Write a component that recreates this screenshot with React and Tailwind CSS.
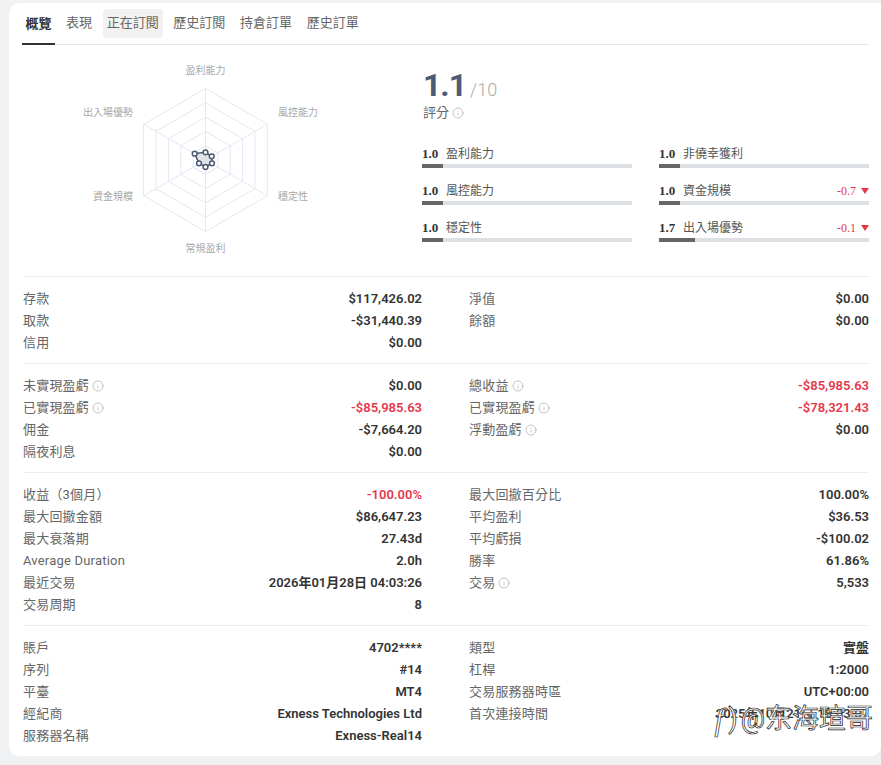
import React from "react";
import { Info } from "lucide-react";

const cjk = "font-['Roboto','Noto_Sans_CJK_TC',sans-serif]";

const tabs = ["表現", "正在訂閱", "歷史訂閱", "持倉訂單", "歷史訂單"];

const scoresLeft = [
  { score: "1.0", label: "盈利能力", pct: "w-[10%]" },
  { score: "1.0", label: "風控能力", pct: "w-[10%]" },
  { score: "1.0", label: "穩定性", pct: "w-[10%]" },
];

const scoresRight = [
  { score: "1.0", label: "非僥幸獲利", pct: "w-[10%]" },
  { score: "1.0", label: "資金規模", pct: "w-[10%]", delta: "-0.7" },
  { score: "1.7", label: "出入場優勢", pct: "w-[17%]", delta: "-0.1" },
];

const sections = [
  {
    left: [
      { label: "存款", value: "$117,426.02" },
      { label: "取款", value: "-$31,440.39" },
      { label: "信用", value: "$0.00" },
    ],
    right: [
      { label: "淨值", value: "$0.00" },
      { label: "餘額", value: "$0.00" },
    ],
  },
  {
    left: [
      { label: "未實現盈虧", value: "$0.00", info: true },
      { label: "已實現盈虧", value: "-$85,985.63", info: true, red: true },
      { label: "佣金", value: "-$7,664.20" },
      { label: "隔夜利息", value: "$0.00" },
    ],
    right: [
      { label: "總收益", value: "-$85,985.63", info: true, red: true },
      { label: "已實現盈虧", value: "-$78,321.43", info: true, red: true },
      { label: "浮動盈虧", value: "$0.00", info: true },
    ],
  },
  {
    left: [
      { label: "收益（3個月）", value: "-100.00%", red: true },
      { label: "最大回撤金額", value: "$86,647.23" },
      { label: "最大衰落期", value: "27.43d" },
      { label: "Average Duration", value: "2.0h" },
      { label: "最近交易", value: "2026年01月28日 04:03:26" },
      { label: "交易周期", value: "8" },
    ],
    right: [
      { label: "最大回撤百分比", value: "100.00%" },
      { label: "平均盈利", value: "$36.53" },
      { label: "平均虧損", value: "-$100.02" },
      { label: "勝率", value: "61.86%" },
      { label: "交易", value: "5,533", info: true },
    ],
  },
  {
    left: [
      { label: "賬戶", value: "4702****" },
      { label: "序列", value: "#14" },
      { label: "平臺", value: "MT4" },
      { label: "經紀商", value: "Exness Technologies Ltd" },
      { label: "服務器名稱", value: "Exness-Real14" },
    ],
    right: [
      { label: "類型", value: "實盤" },
      { label: "杠桿", value: "1:2000" },
      { label: "交易服務器時區", value: "UTC+00:00" },
      { label: "首次連接時間", value: "2025年10月21日 18:03:07" },
    ],
  },
];

const Radar = () => {
  const cx = 182.5;
  const cy = 115;
  const R = 71.5;
  const angles = [-90, -30, 30, 90, 150, 210].map((a) => (a * Math.PI) / 180);
  const hex = (r) =>
    angles.map((a) => `${cx + r * Math.cos(a)},${cy + r * Math.sin(a)}`).join(" ");
  const data = [
    [182.5, 107.3],
    [188.7, 111.3],
    [189, 118.3],
    [182.5, 122],
    [176, 118.3],
    [171.7, 108.7],
  ];
  const labels = [
    { x: 182.5, y: 26, t: "盈利能力", a: "middle" },
    { x: 255, y: 68, t: "風控能力", a: "start" },
    { x: 255, y: 152, t: "穩定性", a: "start" },
    { x: 182.5, y: 204, t: "常規盈利", a: "middle" },
    { x: 110, y: 152, t: "資金規模", a: "end" },
    { x: 110, y: 68, t: "出入場優勢", a: "end" },
  ];
  return (
    <svg width="400" height="230" className="block">
      {[1, 2, 3, 4, 5].map((i) => (
        <polygon key={i} points={hex((R * i) / 5)} fill="none" stroke="#e3e8f3" strokeWidth="1" />
      ))}
      {angles.map((a, i) => (
        <line
          key={i}
          x1={cx}
          y1={cy}
          x2={cx + R * Math.cos(a)}
          y2={cy + R * Math.sin(a)}
          stroke="#e3e8f3"
        />
      ))}
      <polygon
        points={data.map((p) => p.join(",")).join(" ")}
        fill="#d9dadd"
        fillOpacity="0.7"
        stroke="#4e5b75"
        strokeWidth="1.6"
      />
      {data.map((p, i) => (
        <circle key={i} cx={p[0]} cy={p[1]} r="2.4" fill="#fff" stroke="#4e5b75" strokeWidth="1.5" />
      ))}
      {labels.map((l) => (
        <text
          key={l.t}
          x={l.x}
          y={l.y}
          textAnchor={l.a}
          dominantBaseline="middle"
          fontSize="10"
          fill="#a8a8a8"
          fontFamily="'Noto Sans CJK TC', sans-serif"
        >
          {l.t}
        </text>
      ))}
    </svg>
  );
};

const ScoreRow = ({ item }) => (
  <div className="h-[37px]">
    <div className="flex items-center h-[21px] pt-[1px] text-[12px] text-[#555]">
      <span className="font-['Liberation_Serif',serif] font-bold text-[13px] text-[#333] w-[24px]">
        {item.score}
      </span>
      <span>{item.label}</span>
      {item.delta && (
        <span className="ml-auto flex items-center gap-[5px] text-[#e5384c] font-['Liberation_Serif',serif] text-[12px]">
          {item.delta}
          <span className="w-0 h-0 border-l-[4.5px] border-r-[4.5px] border-t-[6px] border-l-transparent border-r-transparent border-t-[#e5384c]" />
        </span>
      )}
    </div>
    <div className="h-[4px] bg-[#dcdfe4]">
      <div className={`h-full bg-[#666] ${item.pct}`} />
    </div>
  </div>
);

const InfoRow = ({ row }) => (
  <div className="flex justify-between items-center h-[22px] text-[13px]">
    <span className="flex items-center gap-[3px] text-[#666] tracking-[0.2px]">
      {row.label}
      {row.info && <Info size={12} strokeWidth={1} className="text-[#888]" />}
    </span>
    <span className={`font-semibold ${row.red ? "text-[#e5384c]" : "text-[#333]"}`}>{row.value}</span>
  </div>
);

const App = () => {
  return (
    <div className={`min-h-[765px] bg-[#eff1f3] pt-[3px] pl-[9px] ${cjk}`}>
      <div className="relative bg-white rounded-tl-[10px] rounded-bl-[10px] rounded-br-[10px] h-[753px] pl-[14px] pr-[12px]">
        {/* Tabs */}
        <div className="flex items-center h-[42px] border-b border-[#e5e6e8] text-[13px] text-[#666]">
          <div className="relative h-full flex items-center w-[33px] -ml-[1px] justify-center font-bold text-[#333]">
            概覽
            <span className="absolute left-0 right-0 -bottom-[1px] h-[2px] bg-[#333]" />
          </div>
          {tabs.map((t, i) => (
            <div
              key={t}
              className={`h-[29px] flex items-center justify-center rounded-[4px] -mt-[1px] ${
                i === 0 ? "w-[34px] ml-[7px]" : "w-[60px] ml-[6.7px]"
              } ${t === "正在訂閱" ? "bg-[#f1f1f1]" : ""}`}
            >
              {t}
            </div>
          ))}
        </div>

        {/* Radar + scores */}
        <div className="flex h-[232px] border-b border-[#eeeeee]">
          <div className="w-[399px] shrink-0">
            <Radar />
          </div>
          <div className="flex-1 min-w-0">
            <div className="pt-[21px] pl-[1px]">
              <div className="flex items-end h-[38px]">
                <span className="text-[32px] leading-[38px] font-bold text-[#4e5b75] tracking-[-1px]">1.1</span>
                <span className="text-[18px] leading-[28px] text-[#aaa] ml-[4px] font-light">/10</span>
              </div>
              <div className="flex items-center gap-[3px] text-[13px] text-[#666] h-[18px]">
                評分
                <Info size={12} strokeWidth={1} className="text-[#888]" />
              </div>
            </div>
            <div className="grid grid-cols-2 gap-x-[27px] mt-[21px]">
              <div>
                {scoresLeft.map((s) => (
                  <ScoreRow key={s.label} item={s} />
                ))}
              </div>
              <div>
                {scoresRight.map((s) => (
                  <ScoreRow key={s.label} item={s} />
                ))}
              </div>
            </div>
          </div>
        </div>

        {/* Stats */}
        {sections.map((sec, i) => (
          <div
            key={i}
            className={`grid grid-cols-[399px_400px] gap-x-[47px] pt-[11px] pb-[9px] ${
              i < sections.length - 1 ? "border-b border-[#eeeeee]" : ""
            }`}
          >
            <div>
              {sec.left.map((r) => (
                <InfoRow key={r.label} row={r} />
              ))}
            </div>
            <div>
              {sec.right.map((r) => (
                <InfoRow key={r.label} row={r} />
              ))}
            </div>
          </div>
        ))}

        {/* Watermark */}
        <div className="absolute right-[8px] bottom-[21px] flex items-center text-[27px] leading-[32px] text-white [-webkit-text-stroke:0.7px_#222] [text-shadow:0_0_2px_#fff]">
          <span className="italic text-[32px] font-['Liberation_Serif',serif] mr-[5px]">f</span>
          <span className="mr-[3px]">)</span>
          <span>@东海瑄哥</span>
        </div>
      </div>
    </div>
  );
};

export default App;
